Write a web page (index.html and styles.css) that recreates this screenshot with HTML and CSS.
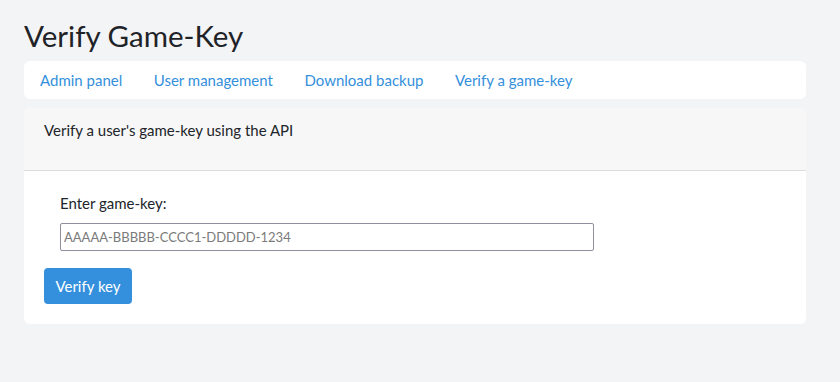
FILE: index.html
```html
<!DOCTYPE html>
<html lang="en">
<head>
    <meta charset="UTF-8">
    <meta name="viewport" content="width=device-width, initial-scale=1.0">
    <title>Verify Game-Key</title>
    <link rel="stylesheet" href="styles.css">
</head>
<body>
    <div class="container">
        <!-- Page title -->
        <h1 class="page-title">Verify Game-Key</h1>

        <!-- Admin navigation -->
        <nav class="admin-nav">
            <a href="#">Admin panel</a>
            <a href="#">User management</a>
            <a href="#">Download backup</a>
            <a href="#" class="active">Verify a game-key</a>
        </nav>

        <!-- Verify card -->
        <div class="card">
            <div class="card-header">Verify a user's game-key using the API</div>
            <div class="card-body">
                <div class="form-group">
                    <label for="game-key">Enter game-key:</label>
                    <input type="text" id="game-key" placeholder="AAAAA-BBBBB-CCCC1-DDDDD-1234">
                </div>
                <button class="btn-primary">Verify key</button>
            </div>
        </div>
    </div>
</body>
</html>
```

FILE: styles.css
```css
body {
    font-family: 'Lato', sans-serif;
    margin: 0;
    padding: 0;
    background: #f3f4f6;
    color: #212529;
    font-size: 15px;
    line-height: 1.6;
}

.container {
    width: 782px;
    margin: 0 0 0 24px;
}

.page-title {
    font-size: 29.5px;
    font-weight: 400;
    margin: 0;
    padding: 17px 0 6px;
    line-height: 38px;
    color: #1f2328;
}

.admin-nav {
    display: flex;
    background: #fff;
    border-radius: 6px;
    height: 38px;
    align-items: center;
    padding: 0 16px;
}

.admin-nav a {
    color: #3490dc;
    text-decoration: none;
    margin-right: 31.5px;
}

.card {
    background: #fff;
    border-radius: 6px;
    margin-top: 9px;
    overflow: hidden;
}

.card-header {
    background: #f7f7f7;
    border-bottom: 1px solid #dcdcdc;
    height: 63px;
    padding: 10px 20px 0;
    box-sizing: border-box;
}

.card-body {
    padding: 20px 20px 20px;
}

.form-group {
    padding: 0 16px;
    margin-bottom: 17px;
}

label {
    display: block;
    margin-bottom: 8px;
}

input[type="text"] {
    width: 534px;
    height: 28px;
    box-sizing: border-box;
    border: 1px solid #8f8f9d;
    border-radius: 2px;
    padding: 0 3px;
    font-family: 'Lato', sans-serif;
    font-size: 13px;
}

input::placeholder {
    color: #7a7a7a;
}

.btn-primary {
    background: #3490dc;
    color: #fff;
    border: none;
    border-radius: 4px;
    width: 88px;
    height: 36px;
    font-family: 'Lato', sans-serif;
    font-size: 15px;
    cursor: pointer;
}
```
